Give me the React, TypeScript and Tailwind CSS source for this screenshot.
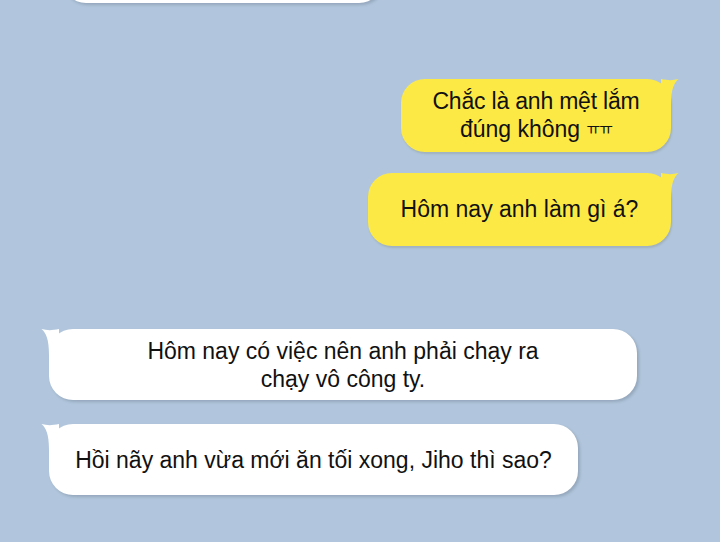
import React from 'react';

const FONT = "font-['Liberation_Sans','Noto_Sans_CJK_KR',sans-serif]";

const Tail: React.FC<{ side: 'left' | 'right'; color: string }> = ({ side, color }) => (
  <svg
    width="18"
    height="26"
    viewBox="0 0 18 26"
    className={`absolute top-0 ${side === 'right' ? '-right-[8px]' : '-left-[8px] -scale-x-100'}`}
  >
    <path d="M0 0 C7 1.5 12 1.5 17.5 0 C13 4 10 10 10 26 L0 26 Z" fill={color} />
  </svg>
);

const MyBubble: React.FC<{ width: string; children: React.ReactNode }> = ({ width, children }) => (
  <div className={`relative self-end ${width} h-[73px] rounded-[24px] bg-[#fde946] shadow-[1px_2px_2px_rgba(90,90,60,0.18)] flex items-center justify-center text-center`}>
    <Tail side="right" color="#fde946" />
    <div className="relative text-[23px] leading-[27px] text-[#111]">{children}</div>
  </div>
);

const TheirBubble: React.FC<{ width: string; children: React.ReactNode }> = ({ width, children }) => (
  <div className={`relative self-start ${width} h-[71px] rounded-[24px] bg-white shadow-[2px_2px_3px_rgba(40,50,70,0.2)] flex items-center justify-center text-center`}>
    <Tail side="left" color="#ffffff" />
    <div className="relative text-[23px] leading-[28px] text-[#111]">{children}</div>
  </div>
);

export default function App() {
  return (
    <div className={`w-[720px] h-[542px] overflow-hidden bg-[#b1c6dc] ${FONT}`}>
      <div className="flex flex-col px-[49px]">
        <div className="ml-[13px] -mt-[70px] w-[321px] h-[73px] rounded-[24px] bg-white shadow-[2px_2px_3px_rgba(40,50,70,0.2)]" />

        <div className="mt-[76px] flex flex-col gap-[21px]">
          <MyBubble width="w-[270px]">
            <div className="tracking-[-0.2px]">Chắc là anh mệt lắm</div>
            <div>
              đúng không <span className="text-[15px] align-[3px] tracking-[-1px]">ㅠㅠ</span>
            </div>
          </MyBubble>
          <MyBubble width="w-[303px]">Hôm nay anh làm gì á?</MyBubble>
        </div>

        <div className="mt-[83px] flex flex-col gap-[24px]">
          <TheirBubble width="w-[588px]">
            <div>Hôm nay có việc nên anh phải chạy ra</div>
            <div>chạy vô công ty.</div>
          </TheirBubble>
          <TheirBubble width="w-[529px]">Hồi nãy anh vừa mới ăn tối xong, Jiho thì sao?</TheirBubble>
        </div>
      </div>
    </div>
  );
}
